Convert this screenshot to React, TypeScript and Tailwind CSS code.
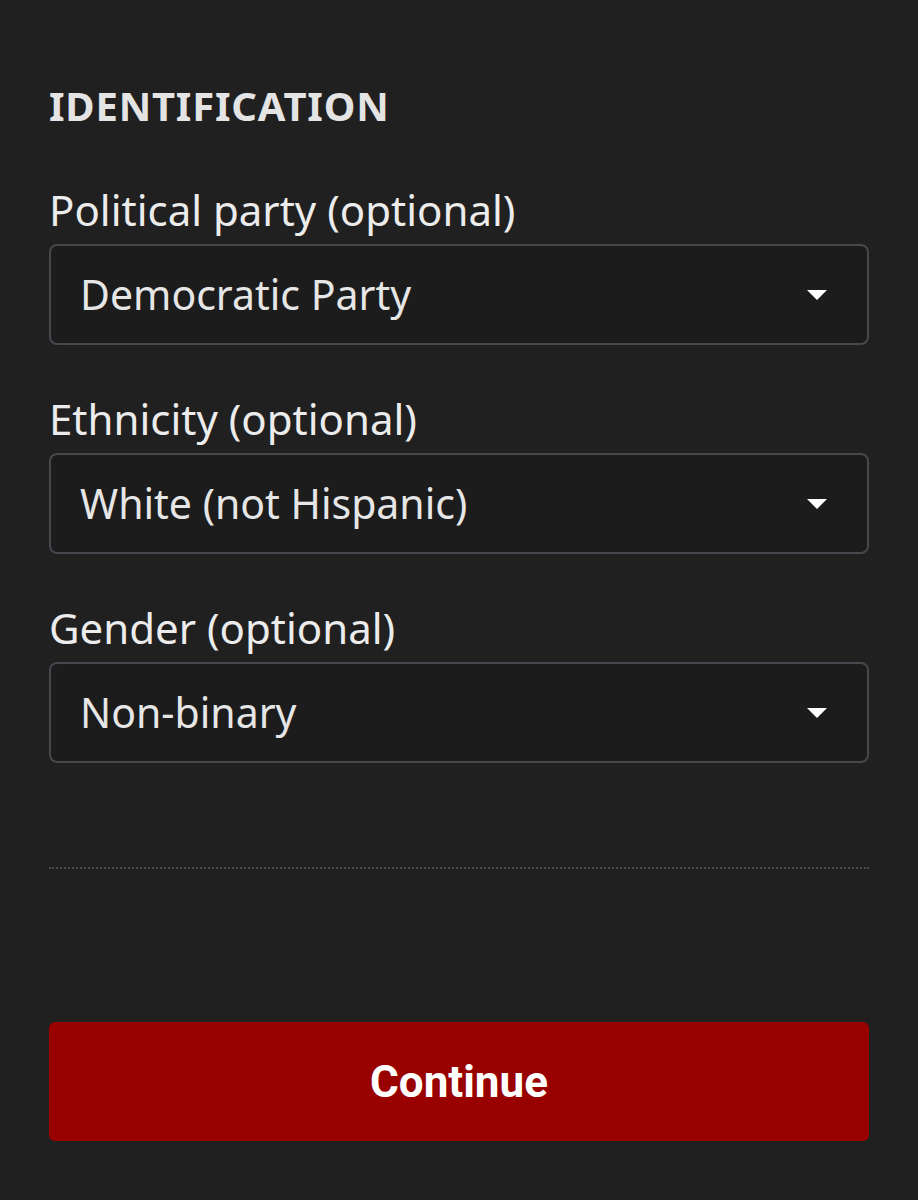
interface SelectFieldProps {
  label: string;
  value: string;
}

function SelectField({ label, value }: SelectFieldProps) {
  return (
    <div className="flex flex-col">
      <label className="text-[42px] leading-[48px] text-[#ececec]">{label}</label>
      <div className="mt-[10px] h-[101px] rounded-[8px] border-2 border-[#45484d] bg-[#1c1c1c] pl-[29px] pr-[40px] flex items-center justify-between">
        <span className="text-[41px] text-[#e6e6e6]">{value}</span>
        <svg width="20" height="10" viewBox="0 0 20 10" className="text-white">
          <path d="M0 0 L20 0 L10 10 Z" fill="currentColor" />
        </svg>
      </div>
    </div>
  );
}

export default function App() {
  return (
    <div
      className="w-[918px] h-[1200px] bg-[#202020] px-[49px] pt-[80px] flex flex-col"
      style={{ fontFamily: '"Noto Sans", sans-serif' }}
    >
      <h2 className="text-[40px] leading-[52px] font-bold tracking-[0.8px] text-[#e4e4e4]">IDENTIFICATION</h2>

      <div className="mt-[54px] flex flex-col gap-[50px]">
        <SelectField label="Political party (optional)" value="Democratic Party" />
        <SelectField label="Ethnicity (optional)" value="White (not Hispanic)" />
        <SelectField label="Gender (optional)" value="Non-binary" />
      </div>

      <div className="mt-[104px] border-t-2 border-dotted border-[#4a4a4a]" />

      <button
        className="mt-[153px] h-[119px] w-full rounded-[6px] bg-[#990000] text-white text-[44px] font-bold"
        style={{ fontFamily: 'Roboto, sans-serif' }}
      >
        Continue
      </button>
    </div>
  );
}
